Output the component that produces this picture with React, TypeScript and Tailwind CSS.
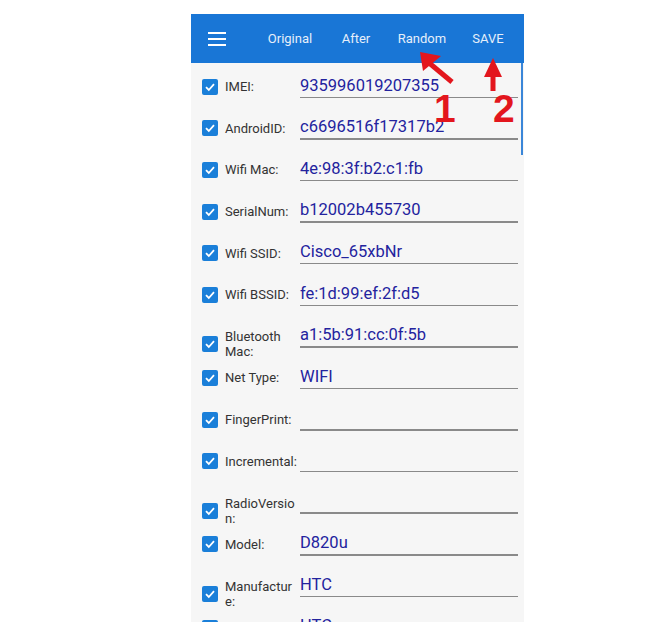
import React from 'react';

type Field = { label: string; value: string; twoLine?: boolean };

const fields: Field[] = [
  { label: 'IMEI:', value: '935996019207355' },
  { label: 'AndroidID:', value: 'c6696516f17317b2' },
  { label: 'Wifi Mac:', value: '4e:98:3f:b2:c1:fb' },
  { label: 'SerialNum:', value: 'b12002b455730' },
  { label: 'Wifi SSID:', value: 'Cisco_65xbNr' },
  { label: 'Wifi BSSID:', value: 'fe:1d:99:ef:2f:d5' },
  { label: 'Bluetooth\nMac:', value: 'a1:5b:91:cc:0f:5b', twoLine: true },
  { label: 'Net Type:', value: 'WIFI' },
  { label: 'FingerPrint:', value: '' },
  { label: 'Incremental:', value: '' },
  { label: 'RadioVersio\nn:', value: '', twoLine: true },
  { label: 'Model:', value: 'D820u' },
  { label: 'Manufactur\ne:', value: 'HTC', twoLine: true },
  { label: 'Brand:', value: 'HTC' },
];

const tabs = ['Original', 'After', 'Random', 'SAVE'];

const CheckBox: React.FC = () => (
  <div className="w-[16px] h-[16px] rounded-[2px] bg-[#1a7fd9] flex items-center justify-center shrink-0">
    <svg width="12" height="12" viewBox="0 0 12 12">
      <polyline points="2,6.2 4.8,9 10,3.2" fill="none" stroke="#fff" strokeWidth="1.8" />
    </svg>
  </div>
);

const FieldRow: React.FC<{ field: Field }> = ({ field }) => (
  <div className="h-[41.6px] flex items-center shrink-0">
    <div className={`flex items-center pl-[11px] w-[109px] shrink-0 ${field.twoLine ? 'mt-[16px]' : ''}`}>
      <CheckBox />
      <span className="ml-[7px] whitespace-pre-line text-[13px] leading-[15px] text-[#333]">{field.label}</span>
    </div>
    <div className="flex flex-col w-[218px]">
      <span className="h-[20px] leading-[20px] text-[16.5px] text-[#23239e] whitespace-nowrap">{field.value}</span>
      <div className="mt-[1px] h-[1.5px] bg-[#8a8a8a]" />
    </div>
  </div>
);

export default function App() {
  return (
    <div className="relative w-[658px] h-[640px] bg-white overflow-hidden font-['Roboto',sans-serif]">
      <div className="ml-[191px] pt-[14px] w-[333px]">
        {/* action bar */}
        <div className="h-[49px] bg-[#1976d6] flex items-center">
          <div className="ml-[17px] w-[18px] flex flex-col gap-[4px]">
            <div className="h-[2px] bg-white" />
            <div className="h-[2px] bg-white" />
            <div className="h-[2px] bg-white" />
          </div>
          <div className="ml-[31px] flex">
            {tabs.map((t) => (
              <div key={t} className="w-[66px] text-center text-[13px] text-[#e6effa]">
                {t}
              </div>
            ))}
          </div>
        </div>

        {/* field list */}
        <div className="relative h-[559px] bg-[#f6f6f6] overflow-hidden pt-[3px] flex flex-col">
          {fields.map((f) => (
            <FieldRow key={f.label} field={f} />
          ))}
          <div className="absolute right-[1px] top-0 w-[2px] h-[92px] bg-[#3a86d8]" />
        </div>
      </div>

      {/* red annotations */}
      <svg className="absolute inset-0" width="658" height="640">
        <line x1="452" y1="82" x2="428" y2="62" stroke="#e3161d" strokeWidth="5" />
        <polygon points="420,52 423,71 441,56" fill="#e3161d" />
        <line x1="493" y1="91" x2="493" y2="70" stroke="#e3161d" strokeWidth="5" />
        <polygon points="493,58 484,77 502,77" fill="#e3161d" />
      </svg>
      <span className="absolute left-[434px] top-[89px] text-[39px] leading-[39px] font-bold text-[#e3161d] font-['Liberation_Sans',sans-serif]">
        1
      </span>
      <span className="absolute left-[493px] top-[89px] text-[39px] leading-[39px] font-bold text-[#e3161d] font-['Liberation_Sans',sans-serif]">
        2
      </span>
    </div>
  );
}
